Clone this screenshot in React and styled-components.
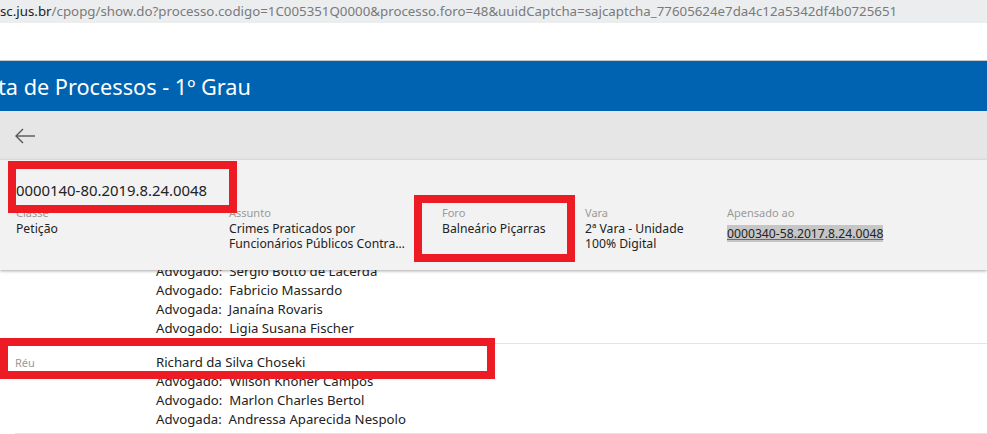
import React from 'react';
import styled, { createGlobalStyle } from 'styled-components';

const GlobalStyle = createGlobalStyle`
  html, body {
    margin: 0;
    padding: 0;
    background: #ffffff;
    overflow: hidden;
  }
  body {
    font-family: "Noto Sans", "Open Sans", sans-serif;
    color: #222;
  }
`;

const Page = styled.div`
  position: relative;
  width: 987px;
  height: 434px;
  overflow: hidden;
`;

const UrlBar = styled.div`
  height: 23px;
  background: #ebedef;
  font-size: 13.3px;
  line-height: 22px;
  color: #7a7a7a;
  white-space: nowrap;
  overflow: hidden;
`;

const Host = styled.span`
  color: #222;
`;

const Blank = styled.div`
  height: 37px;
  border-bottom: 1px solid #c9c9c9;
`;

const Header = styled.div`
  height: 50px;
  background: #0063b1;
  display: flex;
  align-items: center;
`;

const Title = styled.h1`
  margin: 0 0 0 -2px;
  font-size: 21.7px;
  font-weight: 400;
  color: #fff;
  white-space: nowrap;
`;

const Toolbar = styled.div`
  height: 49px;
  background: #e6e6e6;
  display: flex;
  align-items: center;
  padding-left: 14px;
`;

const BackButton = styled.button`
  border: 0;
  background: transparent;
  padding: 0;
  width: 22px;
  height: 22px;
  display: flex;
  align-items: center;
  justify-content: center;
  cursor: pointer;
`;

const Panel = styled.div`
  position: relative;
  z-index: 2;
  background: #f2f2f2;
  height: 110px;
  box-sizing: border-box;
  padding: 20px 0 0 16px;
  box-shadow: 0 1px 3px rgba(0, 0, 0, 0.35);
`;

const Number = styled.div`
  font-size: 14.9px;
  line-height: 20px;
  color: #222;
`;

const Fields = styled.div`
  display: grid;
  grid-template-columns: 213px 213px 143px 142px auto;
  margin-top: 5px;
`;

const Field = styled.div`
  padding-right: ${(p) => p.$gap || '20px'};
`;

const Label = styled.div`
  font-size: 11px;
  line-height: 16px;
  color: #9a9a9a;
`;

const Value = styled.div`
  font-size: 12.2px;
  line-height: 15px;
  color: #222;
  display: -webkit-box;
  -webkit-line-clamp: 2;
  -webkit-box-orient: vertical;
  overflow: hidden;
`;

const LinkValue = styled.a`
  font-size: 12.2px;
  line-height: 15px;
  color: #222;
  background: #c6c6c6;
  text-decoration: underline;
  text-decoration-color: #3a78c3;
`;

const Parties = styled.div`
  position: relative;
  z-index: 1;
  margin-top: -8px;
`;

const Party = styled.div`
  display: grid;
  grid-template-columns: 141px 1fr;
  margin-left: 15px;
  padding: ${(p) => p.$pad || '9px 0 4px'};
  border-bottom: 1px solid #e3e3e3;
`;

const Role = styled.div`
  font-size: 11px;
  line-height: 19px;
  color: #9a9a9a;
`;

const Lines = styled.div`
  display: flex;
  flex-direction: column;
`;

const Line = styled.div`
  font-size: 13.2px;
  line-height: 19px;
  color: #222;
  white-space: pre;
`;

const Mark = styled.div`
  position: absolute;
  z-index: 5;
  border: 8px solid #ed1c24;
  box-sizing: border-box;
  pointer-events: none;
`;

const Arrow = () => (
  <svg width="22" height="16" viewBox="0 0 22 16" fill="none" stroke="#555" strokeWidth="1.4">
    <path d="M21 8H2" />
    <path d="M9 1L2 8l7 7" />
  </svg>
);

const fields = [
  { label: 'Classe', value: 'Petição' },
  { label: 'Assunto', value: 'Crimes Praticados por Funcionários Públicos Contra a Administração em Geral', gap: '36px' },
  { label: 'Foro', value: 'Balneário Piçarras' },
  { label: 'Vara', value: '2ª Vara - Unidade 100% Digital' },
];

const autores = [
  'Advogado:  Sergio Botto de Lacerda',
  'Advogado:  Fabricio Massardo',
  'Advogada:  Janaína Rovaris',
  'Advogado:  Ligia Susana Fischer',
];

const reus = [
  'Richard da Silva Choseki',
  'Advogado:  Wilson Knoner Campos',
  'Advogado:  Marlon Charles Bertol',
  'Advogada:  Andressa Aparecida Nespolo',
];

export default function App() {
  return (
    <Page>
      <GlobalStyle />
      <UrlBar>
        <Host>sc.jus.br</Host>/cpopg/show.do?processo.codigo=1C005351Q0000&amp;processo.foro=48&amp;uuidCaptcha=sajcaptcha_77605624e7da4c12a5342df4b0725651
      </UrlBar>
      <Blank />
      <Header>
        <Title>ta de Processos - 1º Grau</Title>
      </Header>
      <Toolbar>
        <BackButton aria-label="Voltar">
          <Arrow />
        </BackButton>
      </Toolbar>
      <Panel>
        <Number>0000140-80.2019.8.24.0048</Number>
        <Fields>
          {fields.map((f) => (
            <Field key={f.label} $gap={f.gap}>
              <Label>{f.label}</Label>
              <Value>{f.value}</Value>
            </Field>
          ))}
          <Field>
            <Label>Apensado ao</Label>
            <LinkValue href="#">0000340-58.2017.8.24.0048</LinkValue>
          </Field>
        </Fields>
      </Panel>
      <Parties>
        <Party $pad="0 0 5px">
          <Role />
          <Lines>
            {autores.map((l) => (
              <Line key={l}>{l}</Line>
            ))}
          </Lines>
        </Party>
        <Party>
          <Role>Réu</Role>
          <Lines>
            {reus.map((l) => (
              <Line key={l}>{l}</Line>
            ))}
          </Lines>
        </Party>
      </Parties>
      <Mark style={{ left: 8, top: 161, width: 229, height: 52 }} />
      <Mark style={{ left: 414, top: 195, width: 161, height: 67 }} />
      <Mark style={{ left: 0, top: 338, width: 495, height: 41 }} />
    </Page>
  );
}
